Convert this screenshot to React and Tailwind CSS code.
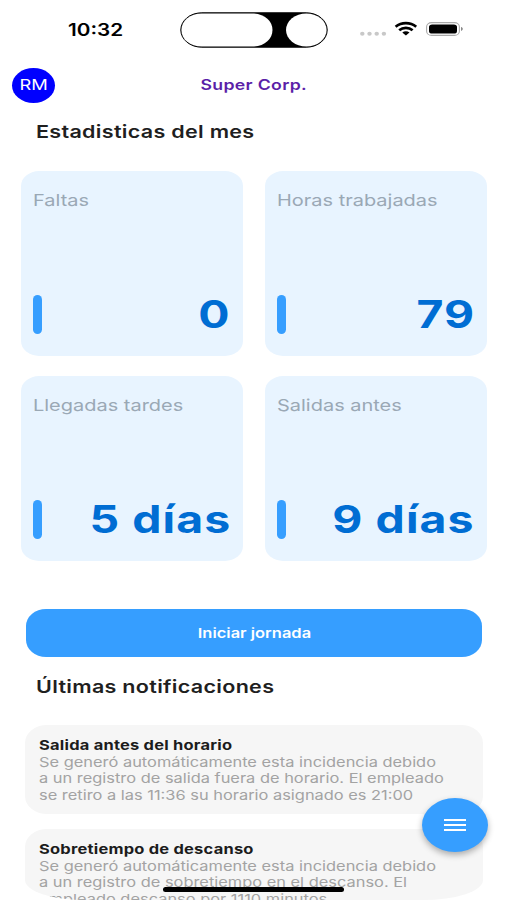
const stats = [
    { label: 'Faltas', value: '0' },
    { label: 'Horas trabajadas', value: '79' },
    { label: 'Llegadas tardes', value: '5 días' },
    { label: 'Salidas antes', value: '9 días' }
]

const notifications = [
    {
        title: 'Salida antes del horario',
        lines: [
            'Se generó automáticamente esta incidencia debido',
            'a un registro de salida fuera de horario. El empleado',
            'se retiro a las 11:36 su horario asignado es 21:00'
        ]
    },
    {
        title: 'Sobretiempo de descanso',
        lines: [
            'Se generó automáticamente esta incidencia debido',
            'a un registro de sobretiempo en el descanso. El',
            'empleado descanso por 1110 minutos'
        ]
    }
]

function StatusBar() {
    return (
        <div className="flex h-[59px] shrink-0 items-center pl-[68px]">
            <span className="w-[112px] origin-left scale-x-[1.22] text-[17px] font-semibold leading-5 text-black">10:32</span>

            {/* Dynamic island */}
            <svg className="shrink-0" width="148" height="36" viewBox="0 0 148 36">
                <rect x="0.8" y="0.8" width="146.4" height="34.4" rx="21" ry="17.2" fill="#000" stroke="#000" strokeWidth="1" />
                <path d="M21.8 1.4H72C84 1.4 92.5 8.5 92.5 18S84 34.6 72 34.6H21.8C10 34.6 1.4 27.5 1.4 18S10 1.4 21.8 1.4Z" fill="#fff" />
                <ellipse cx="126.3" cy="18" rx="20.3" ry="16.6" fill="#fff" />
            </svg>

            <svg className="ml-8 shrink-0" width="104" height="18" viewBox="0 0 104 18">
                <g fill="#c8c8c8">
                    <ellipse cx="2.3" cy="12.8" rx="2.2" ry="2" />
                    <ellipse cx="9.5" cy="12.8" rx="2.2" ry="2" />
                    <ellipse cx="16.7" cy="12.8" rx="2.2" ry="2" />
                    <ellipse cx="23.9" cy="12.8" rx="2.2" ry="2" />
                </g>
                <g fill="none" stroke="#000" strokeWidth="2.7">
                    <path d="M35.6 5.7C41.5 .9 50.3 .9 56.2 5.7" />
                    <path d="M39.2 9.3C43 6 48.8 6 52.6 9.3" />
                </g>
                <path d="M45.9 14.6 42.3 11.6C44.4 9.9 47.400 9.900 49.500 11.600Z" fill="#000" />
                <rect x="66.6" y="1.600" width="32.8" height="12.800" rx="5" ry="4.200" fill="none" stroke="#a9a9a9" strokeWidth="1.1" />
                <rect x="69" y="3.500" width="28" height="9" rx="3.2" ry="2.6" fill="#000" />
                <path d="M101 6.100C103.400 6.800 103.400 9.300 101 10Z" fill="#8a8a8a" />
            </svg>
        </div>
    )
}

function StatCard({ label, value }) {
    return (
        <div className="flex h-[185px] flex-col justify-between rounded-[18px/15px] bg-[#e8f4ff] px-3 pt-[17.500px] pb-[22px]">
            <div className="origin-left scale-x-[1.21] text-[16.5px] leading-[22px] text-[#9aa8b5]">{label}</div>
            <div className="flex h-10 items-center justify-between">
                <div className="h-[39px] w-[9px] rounded-full bg-[#369eff]" />
                <div className="origin-right scale-x-[1.22] text-[38px] font-bold leading-10 tracking-[0.9px] text-[#006dd3]">{value}</div>
            </div>
        </div>
    )
}

function NotificationCard({ title, lines }) {
    return (
        <div className="h-[89px] shrink-0 rounded-[22px/18px] bg-[#f6f6f6] pt-3 pl-[14px]">
            <div className="origin-left scale-x-[1.22] text-[13.5px] font-bold leading-[17px] tracking-[0.18px] text-[#1c1c1c]">{title}</div>
            {lines.map(line => (
                <div key={line} className="origin-left scale-x-[1.215] whitespace-nowrap text-[13.5px] leading-[16.4px] text-[#a3a3a3]">{line}</div>
            ))}
        </div>
    )
}

export default function App() {
    return (
        <div className="relative flex h-[900px] w-[507px] flex-col overflow-hidden bg-white font-['Inter',sans-serif]">
            <StatusBar />

            <header className="grid h-[52px] shrink-0 grid-cols-[43px_1fr_43px] items-center px-3">
                <div className="flex h-[35px] w-[43px] items-center justify-center rounded-[50%] bg-[#0000ff]">
                    <span className="scale-x-[1.22] text-[15px] text-white">RM</span>
                </div>
                <div className="pb-0.5 text-center">
                    <span className="inline-block scale-x-[1.22] text-[14.5px] font-semibold tracking-[0.27px] text-[#5b1fa8]">Super Corp.</span>
                </div>
            </header>

            <h2 className="mt-[9px] ml-9 h-6 shrink-0 origin-left scale-x-[1.23] text-[17.5px] font-semibold leading-6 tracking-[0.24px] text-[#1f1f1f]">Estadisticas del mes</h2>

            <div className="mt-[27px] grid shrink-0 grid-cols-2 gap-x-[22px] gap-y-5 pr-5 pl-[21px]">
                {stats.map(s => <StatCard key={s.label} {...s} />)}
            </div>

            <button className="mr-[25px] ml-[26px] mt-12 flex h-12 shrink-0 items-center justify-center rounded-[20px/17px] bg-[#369eff]">
                <span className="scale-x-[1.22] text-[13.5px] font-semibold text-white">Iniciar jornada</span>
            </button>

            <h2 className="mt-[18px] ml-9 h-6 shrink-0 origin-left scale-x-[1.23] text-[17.5px] font-semibold leading-6 tracking-[0.24px] text-[#1f1f1f]">Últimas notificaciones</h2>

            <div className="mt-[26px] ml-[25px] flex h-[175px] w-[458px] shrink-0 flex-col gap-[15px] overflow-hidden rounded-b-[60px_20px]">
                {notifications.map(n => <NotificationCard key={n.title} {...n} />)}
            </div>

            {/* Floating menu button */}
            <button className="absolute top-[798px] left-[422px] flex h-[54px] w-[66px] items-center justify-center rounded-[50%] bg-[#369eff] shadow-[0_3px_6px_rgba(0,0,0,0.3)]">
                <svg width="22" height="14" viewBox="0 0 22 14" fill="#fff">
                    <rect y="1" width="22" height="2" />
                    <rect y="6" width="22" height="2" />
                    <rect y="11" width="22" height="2" />
                </svg>
            </button>

            {/* Home indicator */}
            <div className="absolute top-[887px] left-[163px] h-[5px] w-[181px] rounded-full bg-black" />
        </div>
    )
}
